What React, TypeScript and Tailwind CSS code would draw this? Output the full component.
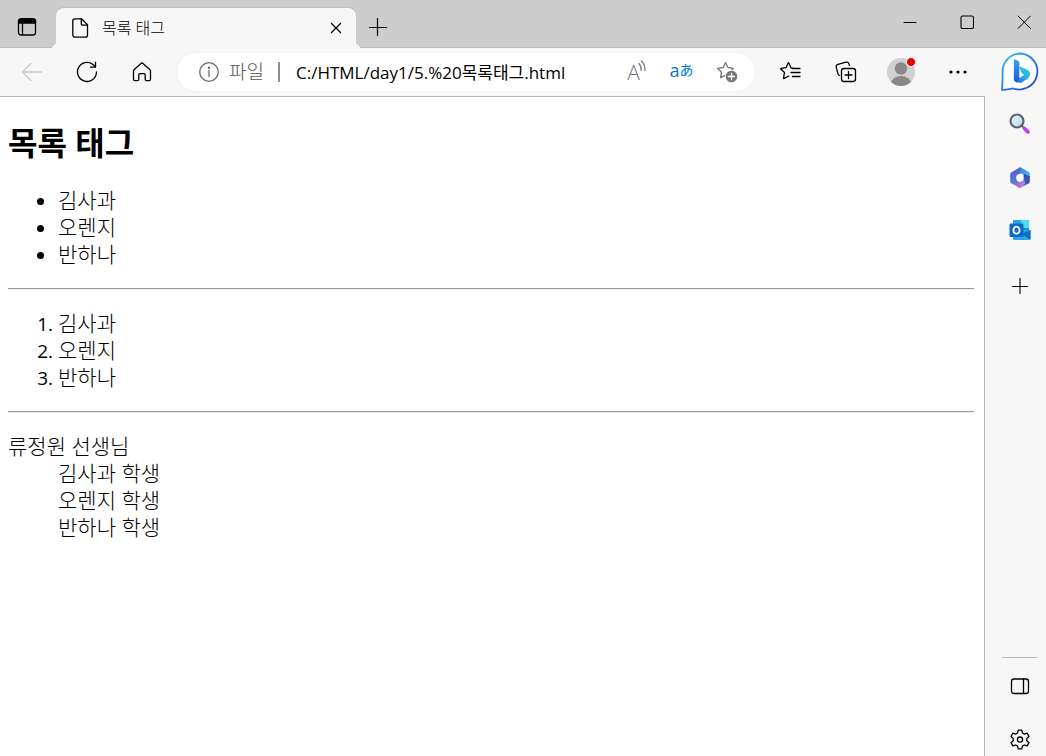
import type { ReactNode } from 'react'
import clsx from 'clsx'

export default function App() {
  return (
    <div className="flex min-h-screen flex-col bg-[#f7f7f7] font-['Open_Sans','Noto_Sans_CJK_KR',sans-serif] text-black">
      <TabBar />
      <div className="flex flex-1">
        <div className="flex min-w-0 flex-1 flex-col">
          <Toolbar />
          <Page />
        </div>
        <Sidebar />
      </div>
    </div>
  )
}

function TabBar() {
  return (
    <header className="flex h-12 items-end justify-between border-b border-[#bebebe] bg-[#cdcdcd]">
      <div className="flex items-end">
        <IconButton label="탭 작업 메뉴" className="ml-[7px] mr-[9px] h-10 w-10">
          <Icon size={20}>
            <rect x="1.5" y="2" width="17" height="16" rx="2.5" />
            <path d="M1.5 4.5a2.5 2.5 0 0 1 2.5-2.5h12a2.5 2.5 0 0 1 2.5 2.5V6h-17z" fill="currentColor" />
            <path d="M5.5 6v12" />
          </Icon>
        </IconButton>
        <div className="relative -mb-px flex h-10 w-[300px] items-center rounded-t-lg bg-[#f7f7f7] pl-3.5 pr-1.5 shadow-[0_-1px_1px_#bebebe]">
          <span className="absolute -left-2 bottom-0 size-2 rounded-br-lg shadow-[4px_4px_0_#f7f7f7]" />
          <span className="absolute -right-2 bottom-0 size-2 rounded-bl-lg shadow-[-4px_4px_0_#f7f7f7]" />
          <Icon size={20}>
            <path d="M5 .8h6.5l6 6V17a2.200 2.200 0 0 1-2.200 2.200H5A2.200 2.200 0 0 1 2.800 17V3A2.200 2.200 0 0 1 5 .8z" />
            <path d="M11.300 1v4.500a1.700 1.700 0 0 0 1.700 1.700h4.300" />
          </Icon>
          <span className="ml-3 flex-1 text-base font-light leading-6">목록 태그</span>
          <IconButton label="탭 닫기" className="size-7">
            <Icon size={12}>
              <path d="M1.500 1.500l9 9M10.500 1.500l-9 9" />
            </Icon>
          </IconButton>
        </div>
        <IconButton label="새 탭" className="ml-1 h-10 w-9">
          <Icon size={18}>
            <path d="M8.500.5v17M.5 9.500h17" strokeWidth="1.200" />
          </Icon>
        </IconButton>
      </div>
      <div className="flex gap-[13px] self-start">
        <IconButton label="최소화" className="h-11 w-11">
          <Icon size={14}>
            <path d="M1 7.500h12" strokeWidth="1" />
          </Icon>
        </IconButton>
        <IconButton label="최대화" className="h-11 w-11">
          <Icon size={14}>
            <rect x="1" y="1" width="12.500" height="12.500" rx="1.600" strokeWidth="1.100" />
          </Icon>
        </IconButton>
        <IconButton label="닫기" className="h-11 w-11">
          <Icon size={14}>
            <path d="M1 1l12.500 12.500M13.500 1L1 13.500" strokeWidth="1" />
          </Icon>
        </IconButton>
      </div>
    </header>
  )
}

const STAR = 'M9.500 1.500l2.400 5 5.600.8-4 3.900 1 5.500-5-2.600-5 2.600 1-5.500-4-3.900 5.600-.8z'

function Toolbar() {
  return (
    <div className="flex h-12 items-center pl-2 pr-[3px]">
      <div className="flex gap-[7px]">
        <IconButton label="뒤로" className="h-10 w-12 text-[#cacaca]">
          <Icon size={22}>
            <path d="M21 11H1.500M10 2.500L1.500 11l8.500 8.500" />
          </Icon>
        </IconButton>
        <IconButton label="새로 고침" className="h-10 w-12">
          <Icon size={22}>
            <path d="M18.800 5.500A9.500 9.500 0 1 0 20.500 11" />
            <path d="M19.500 1.200v5h-5" />
          </Icon>
        </IconButton>
        <IconButton label="홈" className="h-10 w-12">
          <Icon size={20}>
            <path d="M9 1.400a1.500 1.500 0 0 1 2 0l6.800 6a2 2 0 0 1 .7 1.500v8.400a1.300 1.300 0 0 1-1.300 1.300h-2.700a1.300 1.300 0 0 1-1.300-1.300v-4.600a1 1 0 0 0-1-1H7.800a1 1 0 0 0-1 1v4.600a1.300 1.300 0 0 1-1.300 1.300H2.800a1.300 1.300 0 0 1-1.300-1.300V8.900a2 2 0 0 1 .7-1.500z" />
          </Icon>
        </IconButton>
      </div>

      <div className="mx-[11px] flex h-[38px] min-w-0 flex-1 items-center rounded-full bg-white pl-[22px] pr-1.5 shadow-[0_0_3px_#e8e8e8]">
        <span className="text-[#6b6b6b]">
          <Icon size={20}>
            <circle cx="10" cy="10" r="9.300" />
            <path d="M10 8.500v6" />
            <circle cx="10" cy="5.800" r=".6" fill="currentColor" />
          </Icon>
        </span>
        <label htmlFor="address" className="ml-2.5 whitespace-nowrap text-[19px] font-light leading-7 text-[#555]">
          파일
        </label>
        <span className="ml-3.5 mr-4 h-5 w-0.5 shrink-0 bg-[#8c8c8c]" />
        <input
          id="address"
          type="text"
          defaultValue="C:/HTML/day1/5.%20목록태그.html"
          className="mb-0.5 h-8 min-w-0 flex-1 bg-transparent text-[17px] outline-none"
        />
        <div className="flex">
          <button aria-label="소리내어 읽기" className="flex h-8 w-[45px] items-center justify-center text-[#777]">
            <span className="text-[21px] font-light leading-6">A</span>
            <svg width="8" height="16" viewBox="0 0 8 16" fill="none" stroke="currentColor" strokeWidth="1.200" strokeLinecap="round" className="-ml-0.5 -mt-2">
              <path d="M1 3.500a9 9 0 0 1 2 7M3.500 1a13 13 0 0 1 3.500 9.500" />
            </svg>
          </button>
          <button aria-label="번역" className="flex h-8 w-[45px] items-center justify-center pb-1 text-[#0078d4]">
            <span className="text-lg leading-6">a</span>
            <span className="text-sm leading-6">あ</span>
          </button>
          <IconButton label="즐겨찾기에 추가" className="h-8 w-[45px] text-[#777]">
            <Icon size={22}>
              <path d={STAR} />
              <circle cx="15.500" cy="15.500" r="6.300" fill="#777" stroke="#fff" strokeWidth="1" />
              <path d="M15.500 12.500v6M12.500 15.500h6" stroke="#fff" />
            </Icon>
          </IconButton>
        </div>
      </div>

      <div className="flex gap-2">
        <IconButton label="즐겨찾기" className="h-10 w-12">
          <Icon size={22}>
            <path d="M14 7.300l-2-.5L9.800 2Q9.500 1.500 9.200 2L7 6.600l-5 .8q-.6.1-.2.600L5.500 11.500l-1 5.500q0 .7.600.4l4.700-2.400" />
            <path d="M13.500 7.500h7.500M12 11.500h9M13.500 15.500h7.500" />
          </Icon>
        </IconButton>
        <IconButton label="컬렉션" className="h-10 w-12">
          <Icon size={22}>
            <path d="M4.500 14.500A2.500 2.500 0 0 1 3 12.800L1.300 6.300A2.500 2.500 0 0 1 3 3.300l8-2.100a2.500 2.500 0 0 1 3 1.700l.4 1.500" />
            <rect x="6.500" y="7.500" width="14" height="13" rx="2.500" />
            <path d="M13.500 10.500v7M10 14h7" />
          </Icon>
        </IconButton>
        <IconButton label="프로필" className="h-10 w-12">
          <svg width="30" height="30" viewBox="0 0 30 30">
            <clipPath id="avatar">
              <circle cx="14" cy="15" r="14" />
            </clipPath>
            <circle cx="14" cy="15" r="14" fill="#d2d0ce" />
            <g fill="#8a8886" clipPath="url(#avatar)">
              <circle cx="14" cy="11.500" r="6.200" />
              <ellipse cx="14" cy="26.500" rx="10" ry="7.500" />
            </g>
            <circle cx="24" cy="5" r="4.500" fill="#e60000" stroke="#f7f7f7" />
          </svg>
        </IconButton>
        <IconButton label="설정 및 기타" className="h-10 w-12">
          <svg width="18" height="4" viewBox="0 0 18 4">
            <circle cx="2" cy="2" r="1.600" />
            <circle cx="9" cy="2" r="1.600" />
            <circle cx="16" cy="2" r="1.600" />
          </svg>
        </IconButton>
      </div>
    </div>
  )
}

const fruits = ['김사과', '오렌지', '반하나']

function Page() {
  return (
    <main className="flex-1 border-r border-t border-[#b9b9b9] bg-white pb-5 pl-2 pr-2.5 pt-[26px] text-[21px] font-light leading-[27px]">
      <h1 className="mb-6 text-[32px] font-bold leading-10">목록 태그</h1>
      <ul className="list-disc pl-[50px]">
        {fruits.map((name) => (
          <li key={name}>{name}</li>
        ))}
      </ul>
      <Rule />
      <ol className="list-decimal pl-[50px] marker:text-[19px] marker:font-normal">
        {fruits.map((name) => (
          <li key={name}>{name}</li>
        ))}
      </ol>
      <Rule />
      <dl>
        <dt>류정원 선생님</dt>
        {fruits.map((name) => (
          <dd key={name} className="ml-[50px]">
            {name} 학생
          </dd>
        ))}
      </dl>
    </main>
  )
}

function Rule() {
  return <hr className="my-5 border-b border-t border-b-[#ececec] border-t-[#9a9a9a]" />
}

function Sidebar() {
  return (
    <aside className="flex w-[61px] flex-col items-center pl-2">
      <IconButton label="Bing 채팅" className="size-12">
        <BingLogo />
      </IconButton>
      <IconButton label="검색" className="mt-2 size-10">
        <SearchLogo />
      </IconButton>
      <IconButton label="Microsoft 365" className="mt-3.5 size-10">
        <OfficeLogo />
      </IconButton>
      <IconButton label="Outlook" className="mt-3 size-10">
        <OutlookLogo />
      </IconButton>
      <IconButton label="사이드바 사용자 지정" className="mt-4 size-10">
        <Icon size={16}>
          <path d="M8 .5v15M.5 8.500h15" strokeWidth="1.100" />
        </Icon>
      </IconButton>
      <div className="mt-auto w-[35px] border-t border-[#b9b9b9]" />
      <IconButton label="사이드바 숨기기" className="mt-2 size-10">
        <Icon size={20}>
          <rect x="1.500" y="3" width="17" height="14.500" rx="2.500" />
          <path d="M13.500 3v14.500" />
        </Icon>
      </IconButton>
      <IconButton label="설정" className="mb-[-4px] mt-3.5 size-10">
        <Icon size={22}>
          <path d="M9.200 1.200h3.600l.6 2.800 2 1.100 2.700-.9 1.900 3.200-2.200 2v2.300l2.200 2-1.900 3.200-2.700-.9-2 1.100-.6 2.800H9.200l-.6-2.800-2-1.100-2.700.9L2 13.700l2.200-2V9.400L2 7.400l1.900-3.200 2.700.9 2-1.100z" />
          <circle cx="11" cy="10.600" r="2.600" />
        </Icon>
      </IconButton>
    </aside>
  )
}

function BingLogo() {
  return (
    <svg width="40" height="40" viewBox="0 0 40 40">
      <defs>
        <linearGradient id="bubble" x1="0" y1="0" x2="1" y2="1">
          <stop offset="0" stopColor="#27c4ee" />
          <stop offset=".6" stopColor="#2870ea" />
          <stop offset="1" stopColor="#1b44c8" />
        </linearGradient>
        <linearGradient id="stem" x1="0" y1="0" x2="0" y2="1">
          <stop offset="0" stopColor="#35a5f5" />
          <stop offset="1" stopColor="#1658dc" />
        </linearGradient>
        <linearGradient id="bowl" x1="1" y1="0" x2="0" y2="1">
          <stop offset="0" stopColor="#38dfc8" />
          <stop offset=".5" stopColor="#2fa8f0" />
          <stop offset="1" stopColor="#1b5de0" />
        </linearGradient>
      </defs>
      <path
        d="M20.500 1.500a18 18 0 1 1-7.500 34.800q-5 1-11 1.700Q2.600 31 2.600 20A18 18 0 0 1 20.500 1.500z"
        fill="#fff"
        stroke="url(#bubble)"
        strokeWidth="1.800"
        strokeLinejoin="round"
      />
      <path d="M20 14.500l7.500 3.300a4.500 4.500 0 0 1 1.800 6.800l-1.800 2.500-7 4-5.500-1.500 2-2 5.500-3.500 1.500-1.500-2-1-2.600-5.500z" fill="url(#bowl)" />
      <path d="M14 7l4.300 2a1.500 1.500 0 0 1 1 1.400V26l-1.800 4.500A4 4 0 0 1 13.800 27z" fill="url(#stem)" />
    </svg>
  )
}

function SearchLogo() {
  return (
    <svg width="22" height="22" viewBox="0 0 22 22" fill="none">
      <defs>
        <linearGradient id="lens" x1="0" y1="0" x2="1" y2="1">
          <stop offset="0" stopColor="#e9f7ff" />
          <stop offset="1" stopColor="#a8dcf8" />
        </linearGradient>
      </defs>
      <path d="M12 12l3 3" stroke="#666" strokeWidth="2" />
      <path d="M15.500 15.500l3.500 3.500" stroke="#c43df5" strokeWidth="3.800" strokeLinecap="round" />
      <circle cx="8" cy="8" r="6.500" fill="url(#lens)" stroke="#626262" strokeWidth="2.200" />
    </svg>
  )
}

function OfficeLogo() {
  return (
    <svg width="22" height="22" viewBox="0 0 22 22">
      <defs>
        <linearGradient id="officeLeft" x1="0" y1="0" x2="0" y2="1">
          <stop offset="0" stopColor="#5a55c8" />
          <stop offset="1" stopColor="#4a86e0" />
        </linearGradient>
        <linearGradient id="officeRight" x1="0" y1="0" x2="1" y2="1">
          <stop offset="0" stopColor="#3f7fd8" />
          <stop offset="1" stopColor="#4cc4f0" />
        </linearGradient>
        <linearGradient id="officeBottom" x1="0" y1="0" x2="1" y2="0">
          <stop offset="0" stopColor="#8a5cc4" />
          <stop offset="1" stopColor="#bb8add" />
        </linearGradient>
      </defs>
      <path d="M12 .5l7.800 4.500a2 2 0 0 1 1 1.800V11L10 5.500V1q1-1 2-.5z" fill="url(#officeRight)" />
      <path d="M20.800 9v5.500a2 2 0 0 1-1 1.700l-5.800 3.300-1.500-5.500 2.500-7z" fill="#3a52b8" />
      <path d="M1.200 14.500l9 .5 5-2.500 1 4.500-4.200 3.700a2 2 0 0 1-2 0l-7.800-4.500a2 2 0 0 1-1-1.700z" fill="url(#officeBottom)" />
      <path d="M11.500.7v5.800L7.500 9l.5 4.500 2.500 3L2.200 15.700a2 2 0 0 1-1-1.700V7.200a2 2 0 0 1 1-1.700l8-4.700z" fill="url(#officeLeft)" />
      <circle cx="11" cy="10.800" r="3.800" fill="#f7f7f7" />
    </svg>
  )
}

function OutlookLogo() {
  return (
    <svg width="22" height="22" viewBox="0 0 22 22">
      <rect x="4" y="1" width="16" height="19" rx="1" fill="#1490df" />
      <path d="M5 1h7v8H4V2a1 1 0 0 1 1-1z" fill="#28a8ea" />
      <path d="M12 1h7a1 1 0 0 1 1 1v7h-8z" fill="#50d9ff" />
      <path d="M4 11h17.500v9a1 1 0 0 1-1 1H5a1 1 0 0 1-1-1z" fill="#28a8ea" />
      <path d="M21.500 11v9.500L12 15z" fill="#0f6cbd" />
      <rect x=".5" y="4.500" width="14" height="13.500" rx="1.200" fill="#0a6cc8" />
      <ellipse cx="7.500" cy="11.200" rx="3.100" ry="3.500" fill="none" stroke="#fff" strokeWidth="1.800" />
    </svg>
  )
}

function IconButton({ label, className, children }: { label: string; className?: string; children: ReactNode }) {
  return (
    <button aria-label={label} className={clsx('flex shrink-0 items-center justify-center', className)}>
      {children}
    </button>
  )
}

function Icon({ size, children }: { size: number; children: ReactNode }) {
  return (
    <svg
      width={size}
      height={size}
      viewBox={`0 0 ${size} ${size}`}
      fill="none"
      stroke="currentColor"
      strokeWidth="1.3"
      strokeLinecap="round"
      strokeLinejoin="round"
      className="shrink-0"
    >
      {children}
    </svg>
  )
}
